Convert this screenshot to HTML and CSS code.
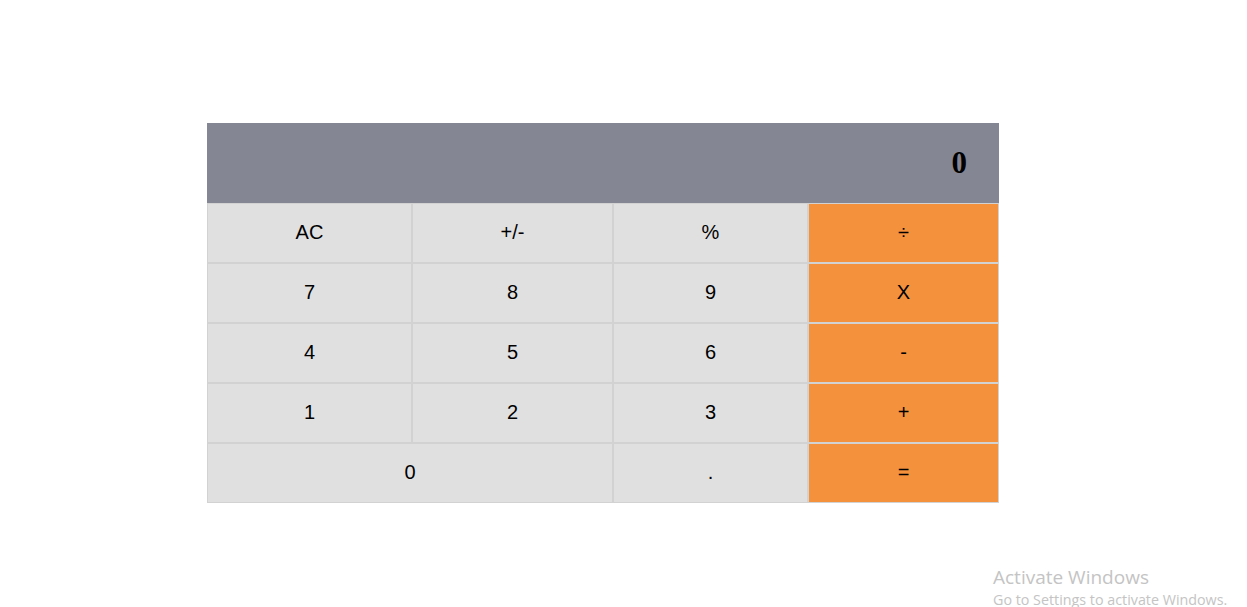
FILE: index.html
```html
<!DOCTYPE html>
<html>
<head>
<meta charset="utf-8">
<link rel="stylesheet" href="styles.css">
</head>
<body>
<div class="page">
  <div class="calc">
    <div class="display">0</div>
    <div class="keys">
      <div class="key">AC</div>
      <div class="key">+/-</div>
      <div class="key">%</div>
      <div class="key op">÷</div>
      <div class="key">7</div>
      <div class="key">8</div>
      <div class="key">9</div>
      <div class="key op">X</div>
      <div class="key">4</div>
      <div class="key">5</div>
      <div class="key">6</div>
      <div class="key op">-</div>
      <div class="key">1</div>
      <div class="key">2</div>
      <div class="key">3</div>
      <div class="key op">+</div>
      <div class="key wide">0</div>
      <div class="key">.</div>
      <div class="key op">=</div>
    </div>
  </div>
</div>
<div class="watermark">
  <div class="wm-title">Activate Windows</div>
  <div class="wm-sub">Go to Settings to activate Windows.</div>
</div>
</body>
</html>
```

FILE: styles.css
```css
html, body {
  margin: 0;
  padding: 0;
  background: #ffffff;
}
body {
  width: 1247px;
  height: 607px;
  overflow: hidden;
  position: relative;
  font-family: "Liberation Sans", Arial, sans-serif;
}
.page {
  padding-top: 123px;
  padding-left: 207px;
}
.calc {
  width: 792px;
}
.display {
  height: 80px;
  background: #858693;
  box-sizing: border-box;
  padding-right: 32px;
  display: flex;
  align-items: center;
  justify-content: flex-end;
  font-family: "Liberation Serif", "Times New Roman", serif;
  font-weight: bold;
  font-size: 31px;
  color: #000;
}
.keys {
  display: grid;
  grid-template-columns: 205px 201px 195px 191px;
  grid-auto-rows: 60px;
}
.key {
  box-sizing: border-box;
  border: 1px solid #d2d2d2;
  background: #e0e0e0;
  display: flex;
  align-items: center;
  justify-content: center;
  padding-bottom: 2px;
  font-size: 20px;
  color: #000;
}
.key.op {
  background: #f4913c;
}
.key.wide {
  grid-column: span 2;
}
.watermark {
  position: absolute;
  left: 993px;
  top: 565px;
  color: #c4c4c4;
  font-family: "Open Sans", "Noto Sans", sans-serif;
}
.wm-title {
  font-size: 19px;
  line-height: 25px;
}
.wm-sub {
  font-size: 14.3px;
  line-height: 20px;
}
```
